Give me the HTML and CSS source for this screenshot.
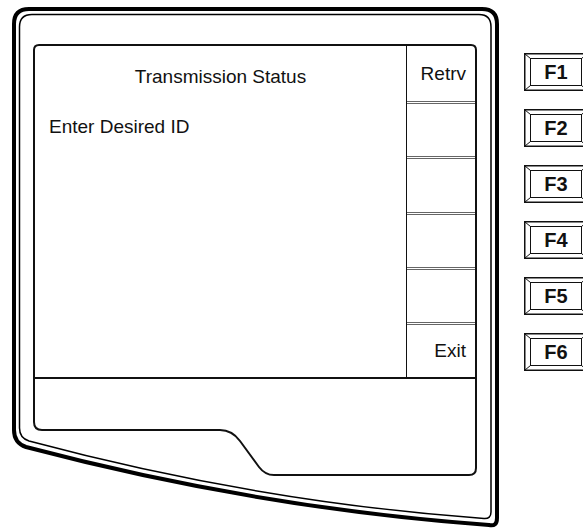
FILE: index.html
```html
<!DOCTYPE html>
<html lang="en">
<head>
    <meta charset="UTF-8">
    <meta name="viewport" content="width=device-width, initial-scale=1.0">
    <title>Transmission Status</title>
    <link rel="stylesheet" href="styles.css">
</head>
<body>
    <div class="panel">
        <div class="device">
            <svg class="bezel" width="500" height="529" viewBox="0 0 500 529">
                <path d="M 14 24 Q 14 9 29 9 L 482 9 Q 497 9 497 24 L 497 518 Q 497 527 489 525 Q 257.5 508 26 447 Q 14 443 14 430 Z" fill="none" stroke="#000" stroke-width="4"/>
                <path d="M 19.5 27 Q 19.5 14.5 32 14.5 L 479 14.5 Q 491 14.5 491 27 L 491 512 Q 491 519 484 518.5 Q 257 502 29 441 Q 19.5 438 19.5 428 Z" fill="none" stroke="#000" stroke-width="1.5"/>
                <path d="M 34 50 Q 34 45 39 45 L 471 45 Q 476 45 476 50 L 476 468 Q 476 475 469 475 L 274 475 Q 265 475 259 467 L 240 441 Q 232 430 220 430 L 42 430 Q 34 430 34 422 Z" fill="none" stroke="#111" stroke-width="2"/>
            </svg>

            <div class="display">
                <div class="main">
                    <p class="title">Transmission Status</p>
                    <p class="prompt">Enter Desired ID</p>
                </div>
                <div class="softkeys">
                    <div class="softkey">Retrv</div>
                    <div class="softkey"></div>
                    <div class="softkey"></div>
                    <div class="softkey"></div>
                    <div class="softkey"></div>
                    <div class="softkey">Exit</div>
                </div>
            </div>
        </div>

        <div class="fkeys">
            <div class="fkey">
                <svg class="bevel" width="64" height="38" viewBox="0 0 64 38">
                    <rect x="0.75" y="0.75" width="62.5" height="36.5" fill="#fff" stroke="#111" stroke-width="1.5"/>
                    <rect x="6.5" y="5.5" width="51" height="27" fill="#fff" stroke="#111" stroke-width="1"/>
                    <path d="M 1 1 L 6.5 5.5 M 63 1 L 57.5 5.5 M 1 37 L 6.5 32.5 M 63 37 L 57.5 32.5" stroke="#111" stroke-width="1"/>
                </svg>
                <span>F1</span>
            </div>
            <div class="fkey">
                <svg class="bevel" width="64" height="38" viewBox="0 0 64 38">
                    <rect x="0.75" y="0.75" width="62.5" height="36.5" fill="#fff" stroke="#111" stroke-width="1.5"/>
                    <rect x="6.5" y="5.5" width="51" height="27" fill="#fff" stroke="#111" stroke-width="1"/>
                    <path d="M 1 1 L 6.5 5.5 M 63 1 L 57.5 5.5 M 1 37 L 6.5 32.5 M 63 37 L 57.5 32.5" stroke="#111" stroke-width="1"/>
                </svg>
                <span>F2</span>
            </div>
            <div class="fkey">
                <svg class="bevel" width="64" height="38" viewBox="0 0 64 38">
                    <rect x="0.75" y="0.75" width="62.5" height="36.5" fill="#fff" stroke="#111" stroke-width="1.5"/>
                    <rect x="6.5" y="5.5" width="51" height="27" fill="#fff" stroke="#111" stroke-width="1"/>
                    <path d="M 1 1 L 6.5 5.5 M 63 1 L 57.5 5.5 M 1 37 L 6.5 32.5 M 63 37 L 57.5 32.5" stroke="#111" stroke-width="1"/>
                </svg>
                <span>F3</span>
            </div>
            <div class="fkey">
                <svg class="bevel" width="64" height="38" viewBox="0 0 64 38">
                    <rect x="0.75" y="0.75" width="62.5" height="36.5" fill="#fff" stroke="#111" stroke-width="1.5"/>
                    <rect x="6.5" y="5.5" width="51" height="27" fill="#fff" stroke="#111" stroke-width="1"/>
                    <path d="M 1 1 L 6.5 5.5 M 63 1 L 57.5 5.5 M 1 37 L 6.5 32.5 M 63 37 L 57.5 32.5" stroke="#111" stroke-width="1"/>
                </svg>
                <span>F4</span>
            </div>
            <div class="fkey">
                <svg class="bevel" width="64" height="38" viewBox="0 0 64 38">
                    <rect x="0.75" y="0.75" width="62.5" height="36.5" fill="#fff" stroke="#111" stroke-width="1.5"/>
                    <rect x="6.5" y="5.5" width="51" height="27" fill="#fff" stroke="#111" stroke-width="1"/>
                    <path d="M 1 1 L 6.5 5.5 M 63 1 L 57.5 5.5 M 1 37 L 6.5 32.5 M 63 37 L 57.5 32.5" stroke="#111" stroke-width="1"/>
                </svg>
                <span>F5</span>
            </div>
            <div class="fkey">
                <svg class="bevel" width="64" height="38" viewBox="0 0 64 38">
                    <rect x="0.75" y="0.75" width="62.5" height="36.5" fill="#fff" stroke="#111" stroke-width="1.5"/>
                    <rect x="6.5" y="5.5" width="51" height="27" fill="#fff" stroke="#111" stroke-width="1"/>
                    <path d="M 1 1 L 6.5 5.5 M 63 1 L 57.5 5.5 M 1 37 L 6.5 32.5 M 63 37 L 57.5 32.5" stroke="#111" stroke-width="1"/>
                </svg>
                <span>F6</span>
            </div>
        </div>
    </div>
</body>
</html>
```

FILE: styles.css
```css
body {
    margin: 0;
    background-color: #ffffff;
    font-family: 'Liberation Sans', Arial, sans-serif;
    color: #111111;
    overflow: hidden;
}

.panel {
    display: flex;
    align-items: flex-start;
    width: 583px;
    height: 529px;
    overflow: hidden;
}

.device {
    position: relative;
    flex: none;
    width: 500px;
    height: 529px;
    padding: 46px 0 0 35px;
    box-sizing: border-box;
}

.bezel {
    position: absolute;
    top: 0;
    left: 0;
}

.display {
    position: relative;
    display: flex;
    width: 440px;
    height: 333px;
    box-sizing: border-box;
    border-bottom: 2px solid #111111;
}

.main {
    flex: 1;
    padding-top: 20px;
}

.main p {
    margin: 0;
    font-size: 19px;
    line-height: 22px;
}

.title {
    text-align: center;
}

.prompt {
    margin-top: 28px !important;
    padding-left: 14px;
}

.softkeys {
    display: grid;
    grid-template-rows: repeat(6, 1fr);
    width: 69px;
    box-sizing: border-box;
    border-left: 1px solid #111111;
}

.softkey {
    display: flex;
    align-items: center;
    justify-content: flex-end;
    padding-right: 9px;
    font-size: 19px;
}

.softkey + .softkey {
    border-top: 3px double #666666;
}

.fkeys {
    display: flex;
    flex-direction: column;
    gap: 18px;
    flex: none;
    padding: 53px 0 0 24px;
}

.fkey {
    position: relative;
    display: flex;
    align-items: center;
    justify-content: center;
    width: 64px;
    height: 38px;
}

.bevel {
    position: absolute;
    top: 0;
    left: 0;
}

.fkey span {
    position: relative;
    font-size: 20px;
    font-weight: bold;
}
```
